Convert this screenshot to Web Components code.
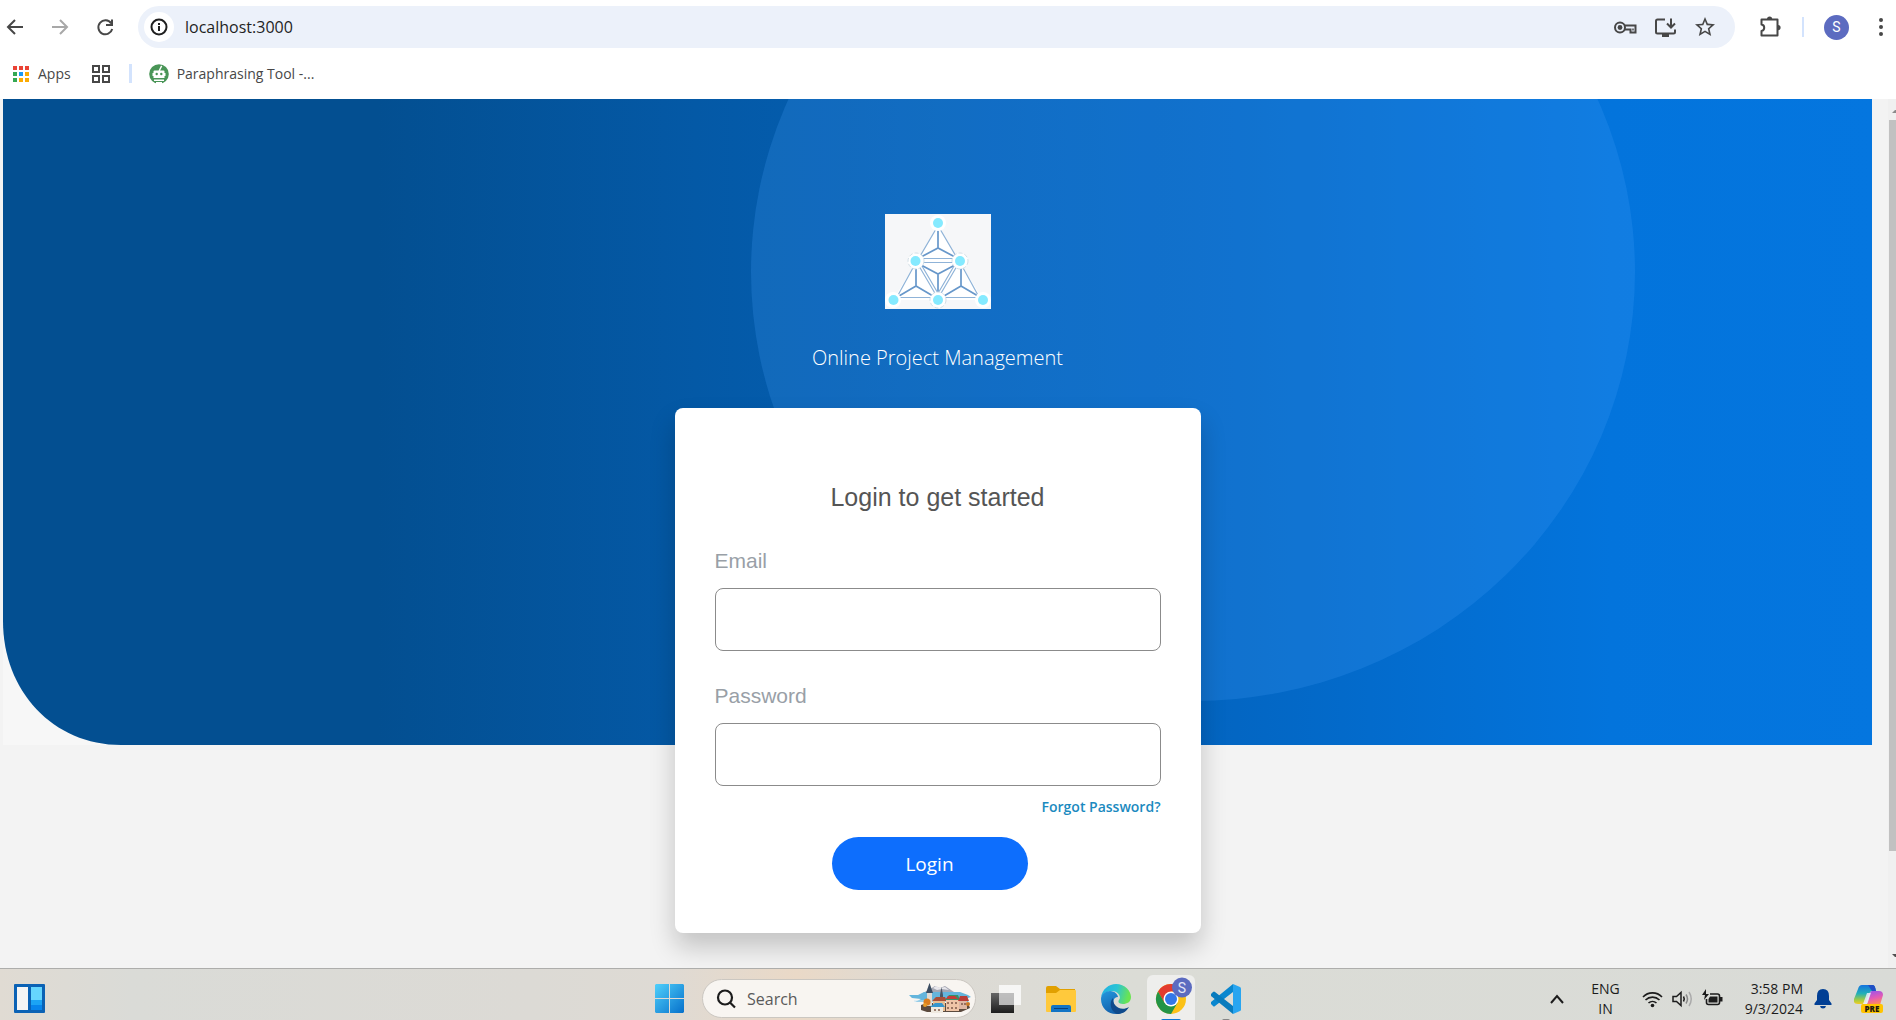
<!DOCTYPE html>
<html lang="en">
<head>
<meta charset="utf-8">
<title>Online Project Management</title>
<style>
html,body{margin:0;height:100%;overflow:hidden}
body{display:flex;flex-direction:column;background:#fff;font-family:"Open Sans","Noto Sans",sans-serif;color:#3c4043}
</style>
</head>
<body>
<browser-toolbar></browser-toolbar>
<bookmark-bar></bookmark-bar>
<web-view><login-page><login-card>
  <form-field label="Email" type="email"></form-field>
  <form-field label="Password" type="password"></form-field>
</login-card></login-page></web-view>
<task-bar></task-bar>
<script>
const define = (name, markup) => customElements.define(name, class extends HTMLElement {
  constructor() {
    super();
    this.attachShadow({ mode: 'open' }).innerHTML =
      `<style>:host,*{box-sizing:border-box}svg{display:block;flex:none}button{font:inherit;color:inherit;background:none;border:0;padding:0;display:grid;place-items:center;flex:none}input{font:inherit;min-width:0}a{text-decoration:none;color:inherit}</style>` + markup;
  }
});

define('browser-toolbar', `
<style>
:host{display:flex;align-items:center;height:54px;flex:none;padding:0 3px;color:#474747}
nav{display:flex;gap:21px;margin-right:21px}
nav button{width:24px;height:24px}
.pill{display:flex;align-items:center;flex:1;height:42px;border-radius:21px;background:#ecf1fa;padding:0 18px 0 6px}
.info{width:30px;height:30px;border-radius:50%;background:#fff;color:#1f1f1f}
.pill input{flex:1;border:0;background:none;outline:0;padding:0;margin-left:11px;font-size:16px;line-height:24px;color:#1f1f1f}
.acts{display:flex;gap:16px;align-items:center}
.ext{margin-left:23px}
i{width:2px;height:20px;background:#d3e3fd;margin:0 20px}
.me{width:25px;height:25px;border-radius:50%;background:#5c6bc0;color:#fff;font:14px/25px Roboto,sans-serif}
.more{margin-left:20px}
</style>
<nav>
<button aria-label="Back"><svg width="24" height="24" viewBox="0 0 24 24" fill="none" stroke="currentColor" stroke-width="2"><path d="M20 12H5M12 5l-7 7 7 7"/></svg></button>
<button aria-label="Forward"><svg width="24" height="24" viewBox="0 0 24 24" fill="none" stroke="#a8a8a8" stroke-width="2"><path d="M4 12h15M12 5l7 7-7 7"/></svg></button>
<button aria-label="Reload"><svg width="24" height="24" viewBox="0 0 24 24" fill="none" stroke="currentColor" stroke-width="2"><path d="M18.2 8.4A7 7 0 1 0 19.200 14M19 4.500V10h-6"/></svg></button>
</nav>
<div class="pill">
<button class="info" aria-label="Site information"><svg width="20" height="20" viewBox="0 0 20 20" fill="none" stroke="currentColor" stroke-width="2"><circle cx="10" cy="10" r="7.500"/><path d="M10 9v5M10 6v2"/></svg></button>
<input aria-label="Address" value="localhost:3000">
<div class="acts">
<button aria-label="Passwords"><svg width="24" height="24" viewBox="0 0 24 24" fill="none" stroke="currentColor" stroke-width="2"><circle cx="7" cy="12.500" r="5"/><circle cx="7" cy="12.500" r="2.400" fill="currentColor" stroke="none"/><path d="M11.600 10.500H22.500V17.500H17.500V14.500H11.600"/><path d="M20 13.500v2" stroke-width="1.500"/></svg></button>
<button aria-label="Install"><svg width="24" height="24" viewBox="0 0 24 24" fill="none" stroke="currentColor" stroke-width="2"><path d="M12 4.500H4.500a1.500 1.500 0 0 0-1.500 1.500v11a1.500 1.500 0 0 0 1.500 1.500h16A1.500 1.500 0 0 0 22 17v-2.500M18 3.500v8.500M14 8.500l4 4 4-4"/><path d="M9 20.500h7" stroke-width="3"/></svg></button>
<button aria-label="Bookmark"><svg width="24" height="24" viewBox="0 0 24 24" fill="currentColor"><path d="M22 9.240l-7.190-.62L12 2 9.190 8.630 2 9.240l5.460 4.730L5.820 21 12 17.270 18.180 21l-1.630-7.030L22 9.240zM12 15.400l-3.760 2.270 1-4.280-3.320-2.880 4.380-.38L12 6.100l1.710 4.040 4.380.38-3.320 2.880 1 4.280L12 15.400z"/></svg></button>
</div></div>
<button class="ext" aria-label="Extensions"><svg width="24" height="24" viewBox="0 0 24 24" fill="none" stroke="currentColor" stroke-width="2"><path d="M3.500 4.500h16v16h-16v-4.500a3.300 3.300 0 0 0 0-6.500z" stroke-linejoin="round"/><path d="M9 4a2.600 2.600 0 0 1 5.200 0zM20 10a2.600 2.600 0 0 1 0 5.200z" fill="currentColor" stroke="none"/></svg></button>
<i></i><button class="me" aria-label="Profile">S</button>
<button class="more" aria-label="Menu"><svg width="24" height="24" viewBox="0 0 24 24" fill="currentColor"><circle cx="12" cy="5" r="2"/><circle cx="12" cy="12" r="2"/><circle cx="12" cy="19" r="2"/></svg></button>`);

define('bookmark-bar', `
<style>
:host{display:flex;align-items:center;height:45px;flex:none;padding:0 12px 6px;font-size:14px;line-height:20px;color:#474747}
a{display:flex;align-items:center;gap:8px}
.grid{margin-left:21px}
i{width:3px;height:19px;background:#d3e3fd;margin:0 17px 0 19px}
</style>
<a href="#"><svg width="18" height="18" viewBox="0 0 18 18"><path fill="#ea4335" d="M1 1h4v4H1zM7 1h4v4H7zM13 1h4v4h-4z"/><path fill="#34a853" d="M1 7h4v4H1zM1 13h4v4H1z"/><path fill="#1a9af5" d="M7 7h4v4H7z"/><path fill="#fbab04" d="M13 7h4v4h-4zM7 13h4v4H7zM13 13h4v4h-4z"/></svg>Apps</a>
<button class="grid" aria-label="Tab groups"><svg width="18" height="18" viewBox="0 0 18 18" fill="none" stroke="#474747" stroke-width="2"><path d="M1 1h6v6H1zM11 1h6v6h-6zM1 11h6v6H1zM11 11h6v6h-6z"/></svg></button>
<i></i>
<a href="#"><svg width="20" height="20" viewBox="0 0 20 20"><circle cx="10" cy="10" r="9.800" fill="#499557"/><path d="M9.600 6.500L12 1.500l1.300.8-2.200 4.200h3.400q1 0 1 1V9h1v3h-1v2h-11v-2h-1V9h1V7.500q0-1 1-1zM5 15.500h10v1.500H5zM7 18h6v2H7z" fill="#fff"/><circle cx="7.700" cy="10" r="1.200" fill="#499557"/><circle cx="12.300" cy="10" r="1.200" fill="#499557"/></svg>Paraphrasing Tool -...</a>`);

define('web-view', `
<style>
:host{display:flex;flex:1;min-height:0;background:#f3f3f3;overflow:hidden}
main{flex:1;min-width:0}
.bar{width:8px;background:#f0f0f0;display:flex;flex-direction:column;align-items:flex-end;overflow:hidden}
.thumb{width:7px;background:#c1c1c1;flex:1;margin-bottom:92px}
.bar svg{margin:11px 0 7px}
.bar svg:last-child{margin-bottom:11px}
</style>
<main><slot></slot></main>
<div class="bar"><svg width="4" height="3"><path d="M0 3L3 0h1v3z" fill="#8b8b8b"/></svg><div class="thumb"></div><svg width="4" height="3"><path d="M0 0h4v3H3z" fill="#505050"/></svg></div>`);

define('login-page', `
<style>
:host{display:grid;padding:0 16px 0 3px}
.bg,.content{grid-area:1/1}
.bg{width:100%;height:646px;background:#f7f7f7}
.content{display:flex;flex-direction:column;align-items:center;padding-top:115px}
h1{margin:34px 0 35px;font-weight:300;font-size:20px;line-height:30px;color:#fff}
</style>
<svg class="bg" viewBox="0 0 1869 646" preserveAspectRatio="none">
<defs><linearGradient id="g"><stop offset="0" stop-color="#034f91"/><stop offset=".2" stop-color="#034f91"/><stop offset=".37" stop-color="#0459a6"/><stop offset=".66" stop-color="#0366c3"/><stop offset=".86" stop-color="#0374dc"/><stop offset="1" stop-color="#0476df"/></linearGradient><clipPath id="c"><path d="M0 0H1869V646H118C50 646 0 592 0 522z"/></clipPath></defs>
<g clip-path="url(#c)"><path fill="url(#g)" d="M0 0h1869v646H0z"/><ellipse cx="1190" cy="173" rx="442" ry="429" fill="#429cf8" opacity=".23"/></g></svg>
<div class="content">
<svg width="106" height="95" viewBox="0 0 106 95" role="img" aria-label="Triangle network logo"><path fill="#f6f7f9" d="M0 0h106v95H0z"/>
<path fill="#fff" d="M53 13L8 86h90z"/>
<g fill="none" stroke="#8fb3d8" stroke-width="1.200"><path d="M51 15L34 44M55 15l17 29M29 52L12 83M77 52l17 31M34 52l17 29M37 52l17 29M72 52L55 81M69 52L52 81M34 44.500h38M36 48.500h34M14 83.500h34M58 83.500h34"/></g>
<g fill="none" stroke="#6797ca" stroke-width="1.700"><path d="M53 16v18M36 43l17-9 17 9M31 52v20M14 82l17-10 17 10M76 52v20M59 82l17-10 17 10M53 80V60M36 51l17 9 17-9"/></g>
<g fill="#fff"><circle cx="53" cy="9" r="8"/><circle cx="8" cy="86" r="8"/><circle cx="98" cy="86" r="8"/><g stroke="#d3dfe6" stroke-dasharray="4 2"><circle cx="31" cy="47" r="8"/><circle cx="75" cy="47" r="8"/><circle cx="53" cy="86" r="8"/></g></g>
<g fill="#85eaff"><circle cx="53" cy="9" r="5"/><circle cx="30.500" cy="47" r="5"/><circle cx="75" cy="47" r="5"/><circle cx="8.500" cy="86" r="5"/><circle cx="53" cy="86" r="5"/><circle cx="98" cy="86" r="5"/></g></svg>
<h1>Online Project Management</h1>
<slot></slot>
</div>`);

define('login-card', `
<style>
:host{display:block;width:526px;max-width:100%;background:#fff;border-radius:8px;padding:74px 40px 43px;box-shadow:0 14px 26px rgba(0,0,0,.2)}
h2{margin:0 0 36px;text-align:center;font:400 25px/30px "Liberation Sans",Arial,sans-serif;color:#555}
.fields{display:flex;flex-direction:column;gap:32px}
.forgot{display:block;text-align:right;font-size:14px;font-weight:600;line-height:20px;margin-top:11px;color:#1b8ac0}
.login{display:block;width:196px;height:53px;margin:20px auto 0 117px;border-radius:27px;background:#0d6efd;color:#fff;font-size:19px;line-height:24px}
</style>
<form><h2>Login to get started</h2>
<div class="fields"><slot></slot></div>
<a class="forgot" href="#">Forgot Password?</a>
<button class="login" type="button">Login</button></form>`);

customElements.define('form-field', class extends HTMLElement {
  constructor() {
    super();
    this.attachShadow({ mode: 'open' });
  }
  connectedCallback() {
    this.shadowRoot.innerHTML = `<style>
:host{display:flex;flex-direction:column;gap:14px}
label{font:21px/26px "Liberation Sans",Arial,sans-serif;color:#999fa7}
input{box-sizing:border-box;width:100%;height:63px;border:1px solid #8b8b8b;border-radius:8px;padding:0 16px;font:inherit;background:#fff;outline:0}
</style><label for="f">${this.getAttribute('label')}</label><input id="f" type="${this.getAttribute('type')}">`;
  }
});

define('task-bar', `
<style>
:host{display:grid;grid-template-columns:1fr auto 1fr;align-items:center;height:52px;flex:none;padding-top:8px;border-top:1px solid #adadab;color:#1c1c1c;background:linear-gradient(90deg,#e0dbd3 0,#dadbd7 7%,#dcdad5 28%,#dedad4 35%,#ead9c7 42%,#dddad4 48%,#dbdcd6 60%,#d9dbd7 100%)}
.left{padding-left:14px}
.mid{display:flex;align-items:center;height:43px}
.search{display:flex;align-items:center;width:274px;height:39px;border-radius:20px;background:#f8f5f1;border:1px solid #cbc7c1;margin:0 15px 0 18px;padding:0 4px 0 12px}
.search input{flex:1;border:0;background:none;outline:0;padding:0 0 0 10px;font-size:16px;line-height:22px}
.search input::placeholder{color:#5a5a5a;opacity:1}
.apps{display:flex;gap:25px;align-items:center}
.chrome{width:48px;height:48px;border-radius:6px 6px 0 0;background:#eeeeec;margin:0 -9px}
.right{display:flex;align-items:center;justify-content:flex-end;padding-right:12px;font-size:14px;line-height:20px}
.two{display:flex;flex-direction:column;align-items:center}
.clock{align-items:flex-end}
.tray{display:flex;gap:9px;margin:0 22px}
.right .two:first-of-type{margin-left:26px}
.bell{margin:0 22px 0 11px}
</style>
<div class="left"><button aria-label="Widgets"><svg width="31" height="29" viewBox="0 0 31 29"><rect width="31" height="29" rx="1" fill="#0b62b5"/><path fill="#f5f5f5" d="M3 3h11v23H3z"/><path fill="#66d6fe" d="M17 3h11v13H17z"/><path fill="#1ba4f5" d="M17 16h11v5H17z"/><path fill="#0785ec" d="M17 21h11v5H17z"/></svg></button></div>
<div class="mid">
<button aria-label="Start"><svg width="29" height="29" viewBox="0 0 29 29"><defs><linearGradient id="w" x1="0" y1="0" x2="29" y2="29" gradientUnits="userSpaceOnUse"><stop stop-color="#4fd0fb"/><stop offset="1" stop-color="#0670cb"/></linearGradient></defs><path fill="url(#w)" d="M1 0h13v14H0V1zM15 0h13l1 1v13H15zM0 15h14v14H1l-1-1zM15 15h14v13l-1 1H15z"/></svg></button>
<div class="search">
<svg width="22" height="22" viewBox="0 0 22 22" fill="none" stroke="#1c1c1c" stroke-width="2.200"><circle cx="10" cy="9.500" r="7"/><path d="M15 14.500l5 5"/></svg>
<input type="search" aria-label="Search" placeholder="Search">
<svg width="62" height="32" viewBox="0 0 62 32"><path d="M14 10L26 3l5 2 5-2 12 8v4H12z" fill="#a5a7b3"/><path d="M24 5l3-2 4 2 5-1 4 3-7-1-5 1z" fill="#e8e7ec"/><path d="M0 12h9l6-3 36 0 8 3 3 2-6 2 4 3H6l6-3-9-1z" fill="#64b5dc"/><path d="M5 18h50" stroke="#c9e5f3"/><path d="M12 22l6-2h41l2 5-9 4H18l-6-2z" fill="#5b4a3e"/><path d="M18 20V8l2.500-8L23 8v15h-5z" fill="#dfdad3"/><path d="M17 10l3.500-10L24 10z" fill="#3b4d62"/><path d="M31 12l1.500-8L34 12v8h-3z" fill="#4c5663"/><path d="M24 18h12v10H24z" fill="#e7bd91"/><path d="M23 18l4-4h9l2 4z" fill="#a94e37"/><path d="M37 16h13v12H37z" fill="#efc5a7"/><path d="M36 17l4-5h9l2 5z" fill="#379166"/><path d="M37 16l2-3h7l3 3z" fill="#c53c37"/><path d="M50 18h8v8h-8z" fill="#ddb7a4"/><path d="M49 18l2-5h7l2 5z" fill="#b83e38"/><path d="M22 23h12v7H22z" fill="#efe9df"/><path d="M21 24l5-4h7l3 4z" fill="#3696cd"/><path d="M39 19v2M43 19v2M47 19v2M39 24v2M43 24v2M47 24v2M53 20v2M56 20v2M26 26v2M30 26v2" stroke="#7d5a4b" stroke-width="1.500"/><circle cx="18" cy="19" r="3.500" fill="#dc7e1d"/><circle cx="16" cy="22" r="2" fill="#e99b26"/><circle cx="59" cy="21" r="2" fill="#c97824"/></svg>
</div>
<div class="apps">
<button aria-label="Task view"><svg width="30" height="30" viewBox="0 0 30 30"><defs><linearGradient id="t" x2="0" y2="1"><stop stop-color="#666"/><stop offset="1" stop-color="#1d1d1d"/></linearGradient></defs><path fill="url(#t)" d="M0 9h23v20H0z"/><path fill="#fff" opacity=".75" d="M8 1h22v20H8z"/><path fill="#999" opacity=".4" d="M8 9h15v12H8z"/></svg></button>
<button aria-label="File Explorer"><svg width="30" height="30" viewBox="0 0 30 30"><path fill="#e1a000" d="M0 4q0-2 2-2h8l4 3h15v5H0z"/><path fill="#ffc93c" d="M0 9h10l4-3h15q1 0 1 1v20q0 1-1 1H1q-1 0-1-1z"/><path fill="#1274c5" d="M5 28v-5q0-2 2-2h16q2 0 2 2v5z"/><path d="M8 24.500h14" stroke="#083f7c"/></svg></button>
<button aria-label="Edge"><svg width="30" height="30" viewBox="0 0 30 30"><defs><linearGradient id="e" y2=".2"><stop stop-color="#21aee5"/><stop offset=".55" stop-color="#2bc4d4"/><stop offset="1" stop-color="#6ae452"/></linearGradient><linearGradient id="e2" x2=".5" y2="1"><stop stop-color="#2398df"/><stop offset="1" stop-color="#125ea9"/></linearGradient></defs><path fill="url(#e)" d="M0 14C1 5 8 0 15 0c9 0 15 7 15 13 0 5-4 7-8 7-5 0-5-3-4-4 3-4-2-9-7-9C6 7 1 10 0 14z"/><path fill="url(#e2)" d="M0 15C0 10 5 7 9 7c5 0 8 4 8 6-5 0-6 6-2 10 3 3 7 3 11 2-3 4-7 5-11 5C7 30 0 24 0 15z"/><path fill="#0f4a8b" d="M12 14c-4 4-3 13 4 16 5 0 9-2 12-7-5 3-11 2-14-2-2-2-2-5-2-7z"/></svg></button>
<button class="chrome" aria-label="Chrome"><svg width="48" height="48" viewBox="0 0 48 48"><g transform="translate(9 9)"><circle cx="15" cy="15" r="15" fill="#fbc116"/><path fill="#e33b2e" d="M2 7.500A15 15 0 0 1 28 7.500H15L8.500 19z"/><path fill="#229447" d="M2 7.500A15 15 0 0 0 15 30l6.500-11.300H8.500z"/><circle cx="15" cy="15" r="7.500" fill="#fff"/><circle cx="15" cy="15" r="6" fill="#3478e8"/></g><circle cx="35" cy="12.500" r="10" fill="#5c6bc0"/><path fill="#0a77d3" d="M14 47v-1q0-2 2-2h16q2 0 2 2v1z"/><text x="35" y="17.500" font-family="Roboto,sans-serif" font-size="14" text-anchor="middle" fill="#e3e6f7">S</text></svg></button>
<button aria-label="Visual Studio Code"><svg width="30" height="48" viewBox="0 0 30 48"><g transform="translate(0 9)"><path fill="#0a87cf" d="M22 0v8L4 22q-1 1-2 0l-2-2q-1-1 0-2z"/><path fill="#087bbd" d="M22 30v-8L4 8q-1-1-2 0l-2 2q-1 1 0 2z"/><path fill="#28a5f0" d="M22 0l7 3q1 .5 1 1.500v21q0 1-1 1.500l-7 3z"/></g><path d="M11 47v-1q0-2 2-2h4q2 0 2 2v1z" fill="#858585"/></svg></button>
</div></div>
<div class="right">
<button aria-label="Hidden icons"><svg width="16" height="16" viewBox="0 0 16 16" fill="none" stroke="currentColor" stroke-width="2"><path d="M2 12l6-7 6 7"/></svg></button>
<div class="two"><span>ENG</span><span>IN</span></div>
<div class="tray">
<svg width="21" height="20" viewBox="0 0 21 20" fill="none" stroke="currentColor" stroke-width="1.600"><path d="M1 8a13 13 0 0 1 19 0M3.500 11a10 10 0 0 1 14 0M6.500 14a6 6 0 0 1 8 0"/><circle cx="10.500" cy="16.500" r="1.800" fill="currentColor" stroke="none"/></svg>
<svg width="21" height="20" viewBox="0 0 21 20" fill="none" stroke="currentColor" stroke-width="1.500"><path d="M1 7.500h3.500L9 3.500v13l-4.500-4H1zM11.500 7.500q1.500 2.500 0 5"/><path d="M14 5.500q3 4.500 0 9" stroke="#888"/><path d="M17 3q4.500 7 0 14" stroke="#aaa"/></svg>
<svg width="21" height="20" viewBox="0 0 21 20" fill="none" stroke="currentColor" stroke-width="1.600"><path d="M8 5h7.500q2 0 2 2v6.500q0 2-2 2h-9q-2 0-2-2V10"/><path d="M8 7.500h7.500v6h-9V10zM18 8h2.500v4.500H18zM4 0L0 6h3L2 11l5-6H4z" fill="currentColor" stroke="none"/></svg>
</div>
<div class="two clock"><span>3:58 PM</span><span>9/3/2024</span></div>
<button class="bell" aria-label="Notifications"><svg width="18" height="20" viewBox="0 0 18 20" fill="#013f94"><path d="M9 0q6 0 6 7v4l2.500 3.500V16H.5v-1.500L3 11V7q0-7 6-7zM6 17h6q-.5 2.500-3 2.500T6 17z"/></svg></button>
<button aria-label="Copilot"><svg width="30" height="30" viewBox="0 0 30 30"><defs><linearGradient id="p" x2="0" y2="1"><stop stop-color="#1473e0"/><stop offset=".45" stop-color="#21b0b8"/><stop offset=".8" stop-color="#a9cc3d"/><stop offset="1" stop-color="#f3cc26"/></linearGradient><linearGradient id="q" x2=".3" y2="1"><stop stop-color="#9154f0"/><stop offset=".6" stop-color="#e45bb5"/><stop offset="1" stop-color="#fd8862"/></linearGradient></defs><path fill="url(#p)" d="M8 1h11q2 0 3 6h-4q-2 0-3 3l-3 7q-1 3-4 3H4q-5 0-4-5L4 5q1-4 4-4z"/><path fill="#204fc5" d="M14 1h5q2 0 3 6h-4z"/><path fill="url(#q)" d="M18 7h7q4 0 4 4l-3 10H11q2 0 3-3l2-9q1-2 2-2z"/><path fill="#e9eefb" d="M13 9h4l-4 11h-4z" opacity=".85"/><rect x="7" y="20" width="22" height="9" rx="2" fill="#ffc400"/><text x="18" y="27.500" font-family="Open Sans,sans-serif" font-size="8" font-weight="800" text-anchor="middle" fill="#1d1a10">PRE</text></svg></button>
</div>`);
</script>
</body>
</html>
